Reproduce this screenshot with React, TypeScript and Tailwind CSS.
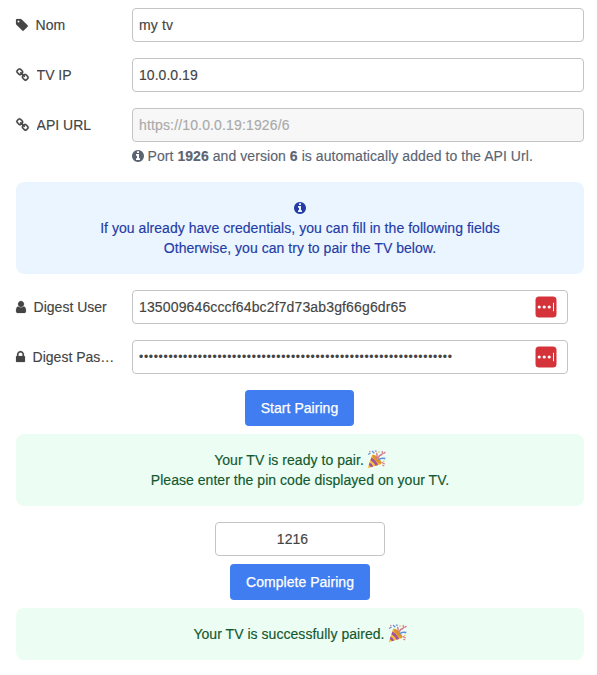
import React from "react";

const paths = {
  tag: "M576 448q0-53-37.5-90.5t-90.5-37.5-90.5 37.5-37.5 90.5 37.5 90.5 90.5 37.5 90.5-37.5 37.5-90.5zm1067 576q0 53-37 90l-491 492q-39 37-91 37-53 0-90-37l-715-716q-38-37-64.5-101t-26.5-117v-416q0-52 38-90t90-38h416q53 0 117 26.5t102 64.5l715 714q37 39 37 91z",
  link: "M1456 1216q0 -40 -28 -68l-208 -208q-28 -28 -68 -28q-42 0 -72 32q3 3 19 18.5t21.5 21.5t15 19t13 25.5t3.5 27.5q0 40 -28 68t-68 28q-15 0 -27.5 -3.5t-25.5 -13t-19 -15t-21.5 -21.5t-18.5 -19q-33 31 -33 73q0 40 28 68l206 207q27 27 68 27q40 0 68 -26l147 -146q28 -28 28 -67zM753 511q0 -40 -28 -68l-206 -207q-28 -28 -68 -28q-39 0 -68 27l-147 146q-28 28 -28 67q0 40 28 68l208 208q27 27 68 27q42 0 72 -31q-3 -3 -19 -18.5t-21.5 -21.5t-15 -19t-13 -25.5t-3.5 -27.5q0 -40 28 -68t68 -28q15 0 27.5 3.5t25.5 13t19 15t21.5 21.5t18.5 19q33 -31 33 -73zM1648 1216q0 120 -85 203l-147 146q-83 83 -203 83q-121 0 -204 -85l-206 -207q-83 -83 -83 -203q0 -123 88 -209l-88 -88q-86 88 -208 88q-120 0 -204 -84l-208 -208q-84 -84 -84 -204t85 -203l147 -146q83 -83 203 -83q121 0 204 85l206 207q83 83 83 203q0 123 -88 209l88 88q86 -88 208 -88q120 0 204 84l208 208q84 84 84 204z",
  user: "M1536 1399q0 109-62.5 187t-150.5 78h-854q-88 0-150.5-78t-62.5-187q0-85 8.5-160.5t31.5-152 58.5-131 94-89 134.5-34.5q131 128 313 128t313-128q76 0 134.5 34.5t94 89 58.5 131 31.5 152 8.5 160.5zm-256-887q0 159-112.5 271.5t-271.5 112.5-271.5-112.5-112.5-271.5 112.5-271.5 271.5-112.5 271.5 112.5 112.5 271.5z",
  lock: "M640 768h512v-192q0-106-75-181t-181-75-181 75-75 181v192zm832 96v576q0 40-28 68t-68 28h-960q-40 0-68-28t-28-68v-576q0-40 28-68t68-28h32v-192q0-184 132-316t316-132 316 132 132 316v192h32q40 0 68 28t28 68z",
  info: "M1152 1376v-160q0-14-9-23t-23-9h-96v-512q0-14-9-23t-23-9h-320q-14 0-23 9t-9 23v160q0 14 9 23t23 9h96v320h-96q-14 0-23 9t-9 23v160q0 14 9 23t23 9h448q14 0 23-9t9-23zm-128-896v-160q0-14-9-23t-23-9h-192q-14 0-23 9t-9 23v160q0 14 9 23t23 9h192q14 0 23-9t9-23zm640 416q0 209-103 385.5t-279.5 279.5-385.5 103-385.5-103-279.5-279.5-103-385.5 103-385.5 279.5-279.5 385.5-103 385.5 103 279.5 279.5 103 385.5z",
};

type IconName = keyof typeof paths;

// Horizontal start and advance of each glyph, 128 units to the pixel.
const boxes: Record<IconName, [number, number]> = {
  tag: [128, 1536],
  link: [0, 1664],
  user: [256, 1280],
  lock: [320, 1152],
  info: [128, 1536],
};

function Icon({ name, className = "" }: { name: IconName; className?: string }) {
  const [x, w] = boxes[name];
  return (
    <svg viewBox={`${x} 0 ${w} 1792`} width={w / 128} height={14} fill="currentColor" stroke="currentColor" strokeWidth={name === "info" ? 0 : 24} className={`shrink-0 overflow-visible ${className}`}>
      <path d={paths[name]} />
    </svg>
  );
}

function Party() {
  return (
    <svg viewBox="0 0 19 19" width={19} height={19} className="mb-[2px] shrink-0">
      <path d="M.7 18.2 5.2 4.6Q12.2 7.6 14.6 14Z" fill="#f8bd3c" />
      <path d="M4.4 7.4Q9.3 10.4 11.2 15L8.5 15.8Q6.9 12.2 3.5 10.2ZM2.7 12.6Q5.2 14.2 6.2 16.5L3.9 17.2Q3.2 15.8 1.8 15Z" fill="#a0529f" />
      <ellipse cx="9.9" cy="9.3" rx="6" ry="2.1" transform="rotate(46 9.9 9.3)" fill="#df9528" />
      <path d="M9 9Q11 6 9.5 2.8M11.3 8.2Q12 5 15 4.5Q16 3 15 1" fill="none" stroke="#d67a91" strokeWidth="1.3" />
      <path d="M11.6 10Q14 7.5 18.3 8.6" fill="none" stroke="#5c8fe0" strokeWidth="1.6" />
      <path d="M1 4.5 3.6 3M5 1 7.4 3.2M8 .8 9.6 1.4" fill="none" stroke="#6f8fd0" strokeWidth="1.3" />
      <path d="M16.4 3.8 18.4 2M14.5 12.2 17.7 14M17.2 16 15.4 15" fill="none" stroke="#dc7890" strokeWidth="1.3" />
      <circle cx="2.8" cy="1.6" r=".8" fill="#df8298" />
      <circle cx="12" cy="2" r=".8" fill="#e7b445" />
      <circle cx="16.8" cy="11.4" r=".7" fill="#e5b64e" />
    </svg>
  );
}

function Row({ icon, label, children }: { icon: IconName; label: string; children: React.ReactNode }) {
  return (
    <div className="flex h-[34px] items-center">
      <div className="mr-4 flex w-[100px] shrink-0 items-center gap-[7.6px]">
        <Icon name={icon} />
        <span className="truncate tracking-normal">{label}</span>
      </div>
      {children}
    </div>
  );
}

const field = "h-[34px] rounded border border-[#c4c4c4] px-1.5 outline-none";

function Credential({ value, secret = false }: { value: string; secret?: boolean }) {
  return (
    <div className="mr-4 flex h-[34px] min-w-0 flex-1 items-center rounded border border-[#c4c4c4] pr-2.5 pl-1.5">
      <input readOnly value={value} className={`min-w-0 flex-1 outline-none ${secret ? "text-[12px] tracking-[0.7px]" : "tracking-[0.14px]"}`} />
      <svg width="22" height="22" viewBox="0 0 22 22" className="shrink-0">
        <rect x=".5" y=".4" width="21" height="21.2" rx="3.6" fill="#d4333a" />
        <g fill="#fff">
          <circle cx="4.2" cy="11" r="1.6" />
          <circle cx="9.2" cy="11" r="1.6" />
          <circle cx="14.2" cy="11" r="1.6" />
          <rect x="18" y="6.8" width="1" height="8.4" />
        </g>
      </svg>
    </div>
  );
}

function Button({ children, className }: { children: string; className: string }) {
  return <button className={`h-9 rounded-[4px] bg-[#3f7df0] font-normal text-white [-webkit-text-stroke:0.25px_white] ${className}`}>{children}</button>;
}

export default function App() {
  return (
    <main className="flex h-[675px] w-[597px] flex-col bg-white pt-2 pr-[13px] pl-4 font-['Helvetica_Neue','Liberation_Sans',sans-serif] text-[14px] leading-5 tracking-[0.04px] text-[#444] [-webkit-text-stroke:0.15px_currentColor]">
      <section className="flex flex-col gap-4">
        <Row icon="tag" label="Nom">
          <input readOnly value="my tv" className={`min-w-0 flex-1 tracking-[0.14px] ${field}`} />
        </Row>
        <Row icon="link" label="TV IP">
          <input readOnly value="10.0.0.19" className={`min-w-0 flex-1 ${field}`} />
        </Row>
        <Row icon="link" label="API URL">
          <input readOnly value="https://10.0.0.19:1926/6" className={`min-w-0 flex-1 bg-[#f7f7f7] tracking-[0.15px] text-[#aaa] ${field}`} />
        </Row>
      </section>
      <div className="mt-1 ml-[116px] flex h-5 items-center gap-[3.5px] tracking-[0.065px] text-[#5b6472]">
        <Icon name="info" />
        <p className="whitespace-nowrap">
          Port <b>1926</b> and version <b>6</b> is automatically added to the API Url.
        </p>
      </div>
      <div className="mt-4 flex h-[92px] flex-col items-center rounded-lg bg-[#ebf5ff] pt-4 text-center text-[#233ba5]">
        <div className="flex h-5 items-center">
          <Icon name="info" />
        </div>
        <p>
          If you already have credentials, you can fill in the following fields
          <br />
          Otherwise, you can try to pair the TV below.
        </p>
      </div>
      <section className="mt-4 flex flex-col gap-4">
        <Row icon="user" label="Digest User">
          <Credential value="135009646cccf64bc2f7d73ab3gf66g6dr65" />
        </Row>
        <Row icon="lock" label="Digest Password">
          <Credential secret value={"•".repeat(64)} />
        </Row>
      </section>
      <section className="mt-4 flex flex-col items-center">
        <Button className="mr-px w-[109px]">Start Pairing</Button>
        <div className="mt-2 flex h-[72px] w-full flex-col items-center rounded-lg bg-[#ecfdf3] pt-4 text-[#12582f]">
          <p className="flex h-5 items-center gap-[3px]">
            Your TV is ready to pair. <Party />
          </p>
          <p>Please enter the pin code displayed on your TV.</p>
        </div>
        <input readOnly value="1216" className={`mt-4 w-[170px] pr-[21px] text-center ${field}`} />
        <Button className="mt-2 w-[140px]">Complete Pairing</Button>
        <div className="mt-2 flex h-[52px] w-full items-center justify-center gap-[3px] rounded-lg bg-[#ecfdf3] text-[#12582f]">
          Your TV is successfully paired. <Party />
        </div>
      </section>
    </main>
  );
}
